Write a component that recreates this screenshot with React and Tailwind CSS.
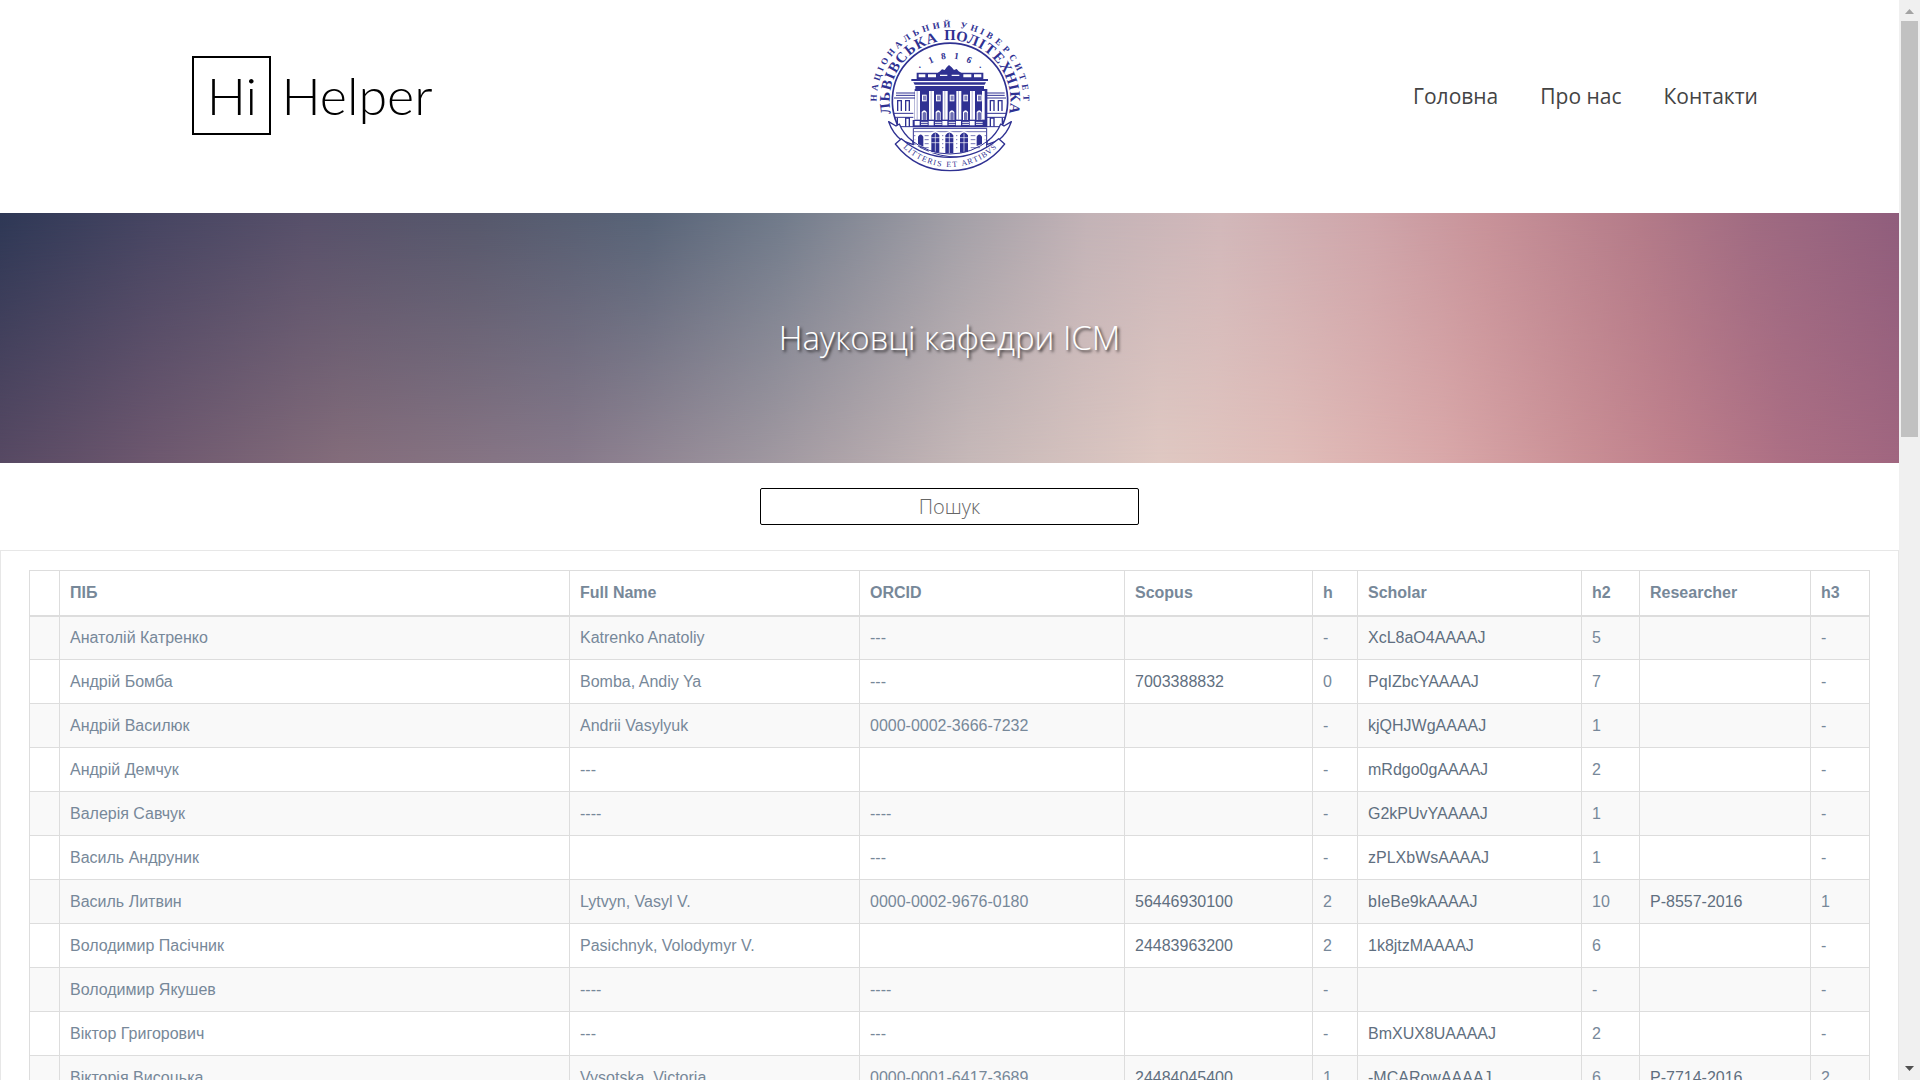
const columns = [
  { label: "", width: "w-[30px]" },
  { label: "ПІБ", width: "w-[510px]" },
  { label: "Full Name", width: "w-[290px]" },
  { label: "ORCID", width: "w-[265px]" },
  { label: "Scopus", width: "w-[188px]" },
  { label: "h", width: "w-[45px]" },
  { label: "Scholar", width: "w-[224px]" },
  { label: "h2", width: "w-[58px]" },
  { label: "Researcher", width: "w-[171px]" },
  { label: "h3", width: "w-[59px]" },
];

const people = [
  ["Анатолій Катренко", "Katrenko Anatoliy", "---", "", "-", "XcL8aO4AAAAJ", "5", "", "-"],
  ["Андрій Бомба", "Bomba, Andiy Ya", "---", "7003388832", "0", "PqIZbcYAAAAJ", "7", "", "-"],
  ["Андрій Василюк", "Andrii Vasylyuk", "0000-0002-3666-7232", "", "-", "kjQHJWgAAAAJ", "1", "", "-"],
  ["Андрій Демчук", "---", "", "", "-", "mRdgo0gAAAAJ", "2", "", "-"],
  ["Валерія Савчук", "----", "----", "", "-", "G2kPUvYAAAAJ", "1", "", "-"],
  ["Василь Андруник", "", "---", "", "-", "zPLXbWsAAAAJ", "1", "", "-"],
  ["Василь Литвин", "Lytvyn, Vasyl V.", "0000-0002-9676-0180", "56446930100", "2", "bIeBe9kAAAAJ", "10", "P-8557-2016", "1"],
  ["Володимир Пасічник", "Pasichnyk, Volodymyr V.", "", "24483963200", "2", "1k8jtzMAAAAJ", "6", "", "-"],
  ["Володимир Якушев", "----", "----", "", "-", "", "-", "", "-"],
  ["Віктор Григорович", "---", "---", "", "-", "BmXUX8UAAAAJ", "2", "", "-"],
  ["Вікторія Висоцька", "Vysotska, Victoria", "0000-0001-6417-3689", "24484045400", "1", "-MCARowAAAAJ", "6", "P-7714-2016", "2"],
];

// Cells that link to an external profile: Scopus, Scholar, Researcher.
const linked = [3, 5, 7];

const navItems = ["Головна", "Про нас", "Контакти"];

function Logo() {
  return (
    <a href="#" className="flex items-center gap-[10px] pr-2 font-['Lato'] text-[52px] leading-none font-light text-black">
      <span className="flex size-[79px] items-center justify-center border-2 border-black">Hi</span>
      <span>Helper</span>
    </a>
  );
}

// Sets letters one by one round the seal's centre; narrow letters take less of the arc.
function ArcLetters({ text, radius, from, to, size, weight = "bold", inward = false }) {
  const letters = text.split("");
  const share = letters.map((letter) => ("ІI ".includes(letter) ? 0.6 : 1));
  const total = share.reduce((sum, n) => sum + n, 0) - (share[0] + share[share.length - 1]) / 2;
  let run = -share[0] / 2;
  return letters.map((letter, i) => {
    const angle = from + ((run + share[i] / 2) / total) * (to - from);
    run += share[i];
    return (
      <text
        key={i}
        x="270"
        y={inward ? 272 + radius : 272 - radius}
        fontSize={size}
        fontWeight={weight}
        textAnchor="middle"
        transform={`rotate(${angle} 270 272)`}
      >
        {letter}
      </text>
    );
  });
}

function Seal() {
  const bays = [178, 220, 261, 302, 343];
  return (
    <svg
      viewBox="0 0 540 510"
      className="h-[170px] w-[180px]"
      fill="#2f3192"
      fontFamily="'Liberation Serif', serif"
      role="img"
      aria-label="Львівська політехніка"
    >
      <ArcLetters text="НАЦІОНАЛЬНИЙ УНІВЕРСИТЕТ" radius={220} from={-88} to={88} size={27} />
      <ArcLetters text="ЛЬВІВСЬКА ПОЛІТЕХНІКА" radius={181} from={-97} to={97} size={44} />
      <ArcLetters text="·1816·" radius={126} from={-42} to={42} size={28} />

      {/* Ring */}
      <path d="M138 384A173 173 0 1 1 402 384" fill="none" stroke="#2f3192" strokeWidth="5" />

      {/* Side wings */}
      <g fill="none" stroke="#2f3192" strokeWidth="3">
        <path d="M108 249H166M108 256H166M374 249H434M374 256H434M102 264H166M374 264H438" />
        <path d="M99 310H160M380 310H441M103 322H160M380 322H437M116 350H160M380 350H424" />
        <path d="M113 303V272H124V303M137 303V272H148V303M391 303V272H402V303M415 303V272H426V303" strokeWidth="4" />
        <path d="M137 350V324H148V350M391 350V324H402V350M112 324V345M427 324V345" strokeWidth="4" />
      </g>

      {/* Roof and cornice */}
      <path d="M232 190L240 184L246 178L254 180L260 172L267 165L275 172L282 180L290 177L296 184L306 190Z" />
      <path d="M170 188H370V208H170Z" />
      <path
        d="M176 193H196V202H176ZM204 193H228V202H204ZM240 194H262V198H240ZM275 194H298V198H275ZM310 193H334V202H310ZM342 193H364V202H342Z"
        fill="white"
      />
      <path d="M154 207H384V213H154ZM160 217H378L374 224H164ZM166 228H372V237H166Z" />

      {/* Main facade with columns */}
      <path d="M164 237H382V352H158V330H164Z" />
      {bays.map((x) => (
        <g key={x}>
          <rect x={x - 13} y="243" width="15" height="86" fill="white" />
          <rect x={x - 8} y="243" width="3" height="86" opacity="0.4" />
          <rect x={x + 8} y="254" width="14" height="20" fill="white" />
          <rect x={x + 11} y="257" width="9" height="14" opacity="0.6" />
          <path d={`M${x + 7} 330V306Q${x + 15} 296 ${x + 22} 306V330Z`} fill="white" />
          <path d={`M${x + 10} 330V309Q${x + 15} 303 ${x + 20} 309V330Z`} opacity="0.7" />
          <path d={`M${x - 14} 333H${x + 1}V346H${x - 14}Z`} fill="white" />
          <path d={`M${x + 5} 337H${x + 25}M${x + 5} 343H${x + 25}`} stroke="white" strokeWidth="3" />
        </g>
      ))}
      <rect x="366" y="243" width="8" height="86" fill="white" />

      {/* Ground floor arches */}
      <path d="M160 355H380V420Q270 470 160 400Z" fill="white" stroke="#2f3192" strokeWidth="3" />
      <path d="M162 365H378M162 377H378M164 389H376M170 401H370M180 413H360" stroke="#2f3192" strokeWidth="2" />
      <path d="M166 410V376Q180 360 194 376V405ZM206 428V374Q226 352 246 374V430ZM250 430V374Q269 352 288 374V430ZM292 430V374Q312 352 332 374V428ZM346 412V376Q360 360 374 376V402Z" fill="white" />
      <path d="M174 402V380Q182 367 190 380V410ZM214 426V376Q226 359 238 376V428ZM256 430V376Q268 359 280 376V430ZM300 428V376Q312 359 324 376V426ZM350 408V380Q358 367 366 380V402Z" />
      <path d="M226 370V426M268 370V430M312 370V426M214 383H324M214 398H324" stroke="white" strokeWidth="2" />

      {/* Ribbon */}
      <g fill="white" stroke="#2f3192" strokeWidth="4" strokeLinejoin="round">
        <path d="M126 392Q98 370 86 335L108 348L118 342Q130 372 158 394L160 404Z" />
        <path d="M414 392Q442 370 454 335L432 348L422 342Q410 372 382 394L380 404Z" />
        <path d="M106 402L124 386Q190 442 270 442Q350 442 416 386L434 402Q372 482 270 482Q168 482 106 402Z" />
      </g>
      <path d="M150 388Q205 432 270 432Q335 432 390 388" fill="none" stroke="#2f3192" strokeWidth="3" />
      <ArcLetters text="LITTERIS ET ARTIBVS" radius={199} from={43} to={-43} size={24} weight="normal" inward />
    </svg>
  );
}

function Header() {
  return (
    <header className="grid grid-cols-3 place-items-center pt-[10px] pb-[33px]">
      <Logo />
      <Seal />
      <nav className="flex gap-[42px] pt-px pl-1.5 text-[21px] leading-8 text-[#444]">
        {navItems.map((item) => (
          <a key={item} href="#">{item}</a>
        ))}
      </nav>
    </header>
  );
}

function Hero() {
  return (
    <section className="relative flex h-[250px] items-center justify-center bg-[linear-gradient(92deg,#2e3856_0%,#464562_8%,#57506a_16%,#56586c_25%,#586478_34%,#717b8b_41%,#a29fa7_50%,#c3b3b7_57%,#d2b8ba_64%,#cfa5aa_72%,#c89299_78%,#b47b89_86%,#a06b82_92%,#8f5d7c_100%)]">
      <div className="absolute inset-0 bg-[linear-gradient(90deg,#574963_0%,#6e586f_8%,#846d7b_18%,#87798a_30%,#9e969f_40%,#c6b8b8_51%,#dfc8c2_61%,#e0bdb9_68%,#d9a8a9_76%,#ca9096_83%,#bf808c_88%,#ac6f84_94%,#a06680_100%)] mask-[linear-gradient(to_bottom,transparent,black)]" />
      <h1 className="relative text-[33px] font-light text-white [text-shadow:2px_2px_3px_#000000b0]">
        Науковці кафедри ІСМ
      </h1>
    </section>
  );
}

function PeopleTable() {
  return (
    <section className="border border-[#e7e7e7] px-7 pt-[19px] font-['Liberation_Sans',Arial,sans-serif] text-base">
      <table className="w-full table-fixed border-collapse text-left leading-[23px] text-[#778899]">
        <colgroup>
          {columns.map(({ width }, i) => (
            <col key={i} className={width} />
          ))}
        </colgroup>
        <thead>
          <tr>
            {columns.map(({ label }, i) => (
              <th key={i} className="h-[45px] border border-b-2 border-[#dddddd] px-[10px] font-bold">{label}</th>
            ))}
          </tr>
        </thead>
        <tbody>
          {people.map((row) => (
            <tr key={row[0]} className="odd:bg-[#f9f9f9]">
              <td className="border border-[#dddddd]" />
              {row.map((value, i) => (
                <td key={i} className="h-11 border border-[#dddddd] px-[10px]">
                  {linked.includes(i) && value ? <a href="#" className="text-[#5f6f80]">{value}</a> : value}
                </td>
              ))}
            </tr>
          ))}
        </tbody>
      </table>
    </section>
  );
}

function ScrollRail() {
  return (
    <div aria-hidden="true" className="flex w-[21px] shrink-0 flex-col items-center bg-[#f0f0f0]">
      <svg viewBox="0 0 21 21" className="w-full" fill="#a3a3a3"><path d="M6 14L10.500 9L15 14Z" /></svg>
      <div className="h-[38.5%] w-[17px] bg-[#c1c1c1]" />
      <svg viewBox="0 0 21 21" className="mt-auto w-full" fill="#505050"><path d="M6 7H15L10.500 12Z" /></svg>
    </div>
  );
}

export default function App() {
  return (
    <div className="flex h-screen overflow-hidden bg-white font-['Open_Sans','Noto_Sans',sans-serif]">
      <main className="min-w-0 flex-1 overflow-hidden">
        <Header />
        <Hero />
        <form role="search" className="flex justify-center py-[25px]">
          <input
            type="text"
            aria-label="Пошук"
            placeholder="Пошук"
            className="h-[37px] w-1/5 rounded-xs border border-black text-center text-xl font-light placeholder:text-[#666]"
          />
        </form>
        <PeopleTable />
      </main>
      <ScrollRail />
    </div>
  );
}
